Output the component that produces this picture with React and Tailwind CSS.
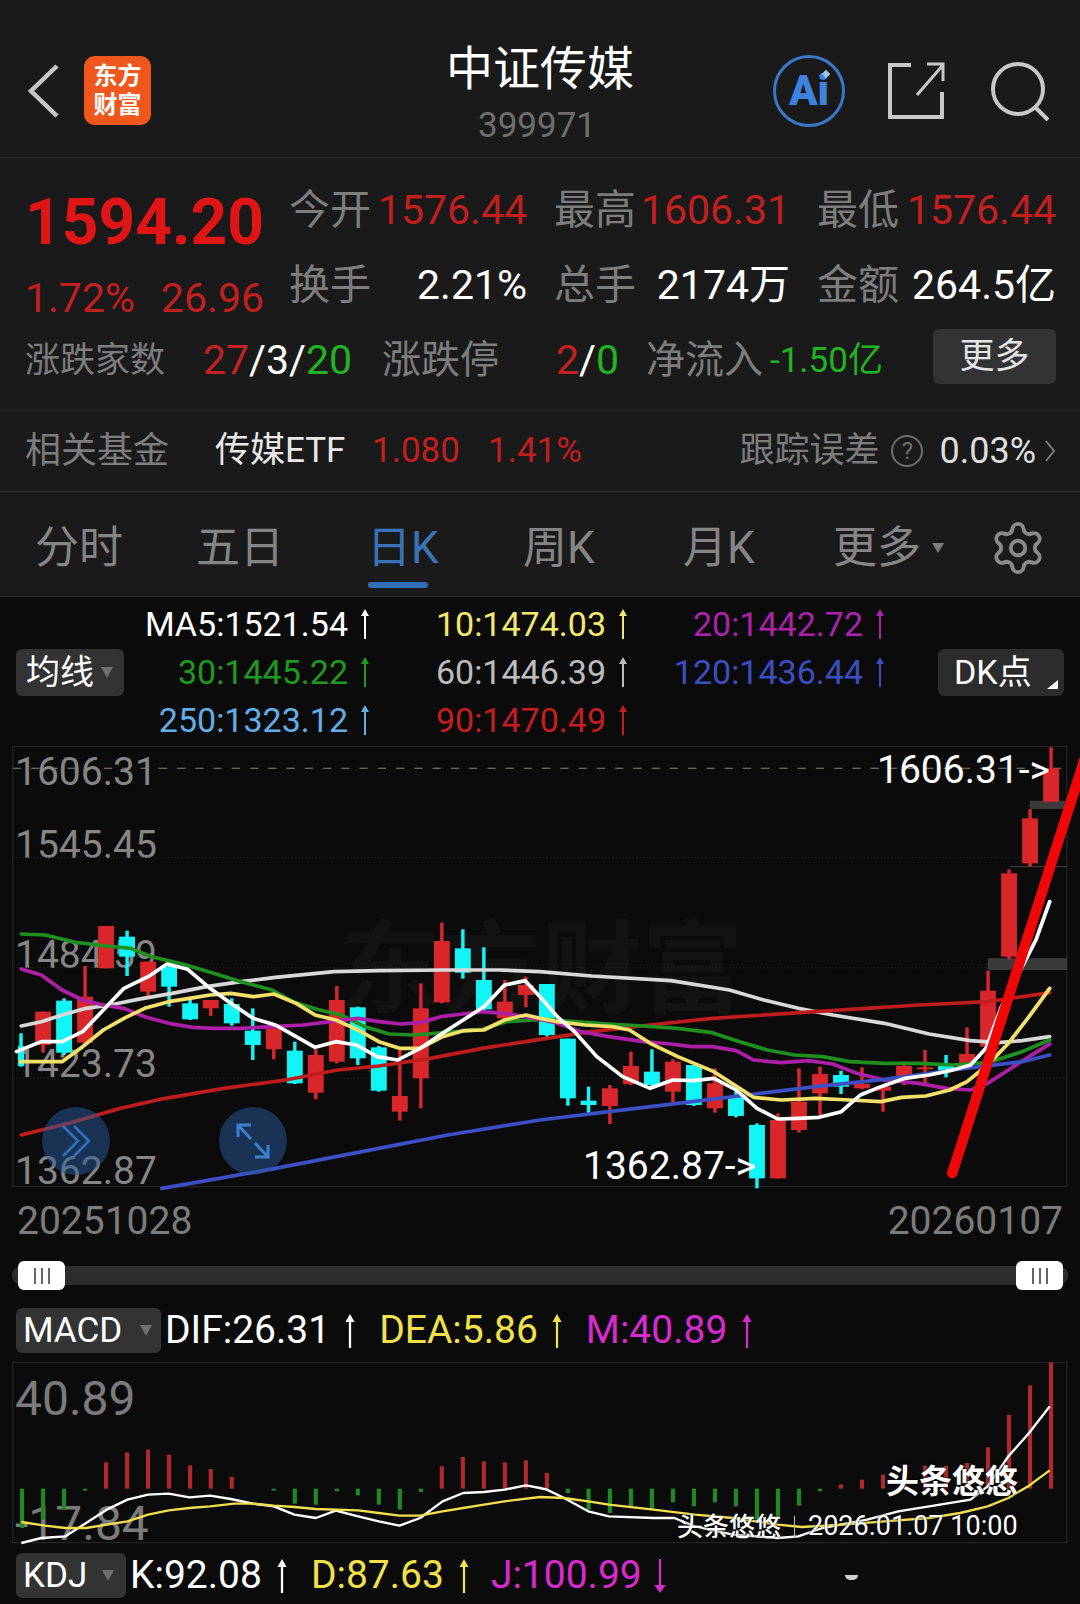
import React from "react";
import { Settings } from "lucide-react";

// candles: [x, wickTop, wickBottom, bodyTop, bodyBottom, up?]
const candles = [
  [61, 880, 980, 918, 978, 0], [125, 815, 938, 815, 915, 1], [186, 775, 945, 782, 938, 0], [247, 678, 910, 770, 908, 1],
  [308, 558, 685, 558, 685, 1], [369, 572, 708, 590, 650, 0], [430, 665, 770, 665, 755, 1], [491, 668, 800, 680, 740, 0],
  [552, 770, 840, 790, 838, 0], [612, 780, 828, 780, 805, 1], [673, 775, 857, 792, 850, 0], [734, 805, 960, 872, 915, 0],
  [795, 865, 958, 865, 928, 1], [856, 905, 1032, 932, 1030, 0], [917, 928, 1078, 945, 1058, 1], [978, 738, 970, 780, 965, 1],
  [1039, 800, 975, 802, 955, 0], [1100, 918, 1055, 922, 1052, 0], [1161, 930, 1142, 1068, 1115, 1], [1222, 730, 1105, 805, 1015, 1],
  [1283, 548, 790, 603, 787, 1], [1344, 568, 716, 625, 698, 0], [1405, 622, 810, 720, 808, 0], [1466, 720, 840, 785, 835, 1],
  [1527, 710, 802, 735, 765, 1],
  [1588, 732, 890, 732, 885, 0], [1649, 896, 1097, 896, 1075, 0], [1709, 1040, 1122, 1082, 1095, 0], [1771, 1035, 1152, 1045, 1098, 1],
  [1832, 935, 1035, 978, 1032, 1], [1893, 928, 1040, 995, 1035, 0], [1954, 958, 1088, 965, 1055, 1], [2015, 975, 1098, 975, 1095, 0],
  [2076, 985, 1118, 1030, 1105, 1], [2137, 1050, 1132, 1068, 1128, 0], [2198, 1150, 1345, 1155, 1315, 0], [2259, 1120, 1315, 1140, 1315, 1],
  [2320, 985, 1178, 1085, 1170, 1], [2381, 980, 1125, 1002, 1060, 1], [2442, 992, 1062, 1005, 1040, 0], [2503, 982, 1048, 1032, 1045, 1],
  [2564, 1040, 1115, 1040, 1052, 1], [2625, 965, 1035, 978, 1012, 1], [2686, 930, 1030, 982, 988, 1], [2747, 945, 1012, 978, 992, 0],
  [2808, 862, 975, 942, 975, 1], [2869, 692, 925, 752, 920, 1], [2930, 388, 658, 400, 650, 1], [2991, 208, 380, 235, 370, 1],
  [3052, 22, 185, 85, 185, 1],
];

// moving averages, right half x is offset by 1568
const R = 1568;
const toPoints = (left, right) =>
  [...left.map(([x, y]) => `${x},${y}`), ...right.map(([x, y]) => `${x + R},${y}`)].join(" ");

const maLines = [
  ["#d8d8d8", toPoints(
    [[62,858],[120,845],[180,825],[250,805],[320,795],[400,778],[500,760],[600,740],[700,725],[800,712],[970,695],[1100,692],[1300,690],[1450,690],[1568,695]],
    [[150,708],[380,722],[550,750],[650,780],[750,805],[850,825],[1000,850],[1130,882],[1250,902],[1330,908],[1400,902],[1480,890]])],
  ["#bf1d1d", toPoints(
    [[62,1185],[200,1150],[350,1105],[480,1075],[650,1045],[830,1020],[980,990],[1100,978],[1250,955],[1400,925],[1568,898]],
    [[150,875],[320,855],[500,835],[800,815],[1100,795],[1300,785],[1480,758]])],
  ["#1f8f1f", toPoints(
    [[62,582],[130,585],[220,607],[310,618],[380,625],[440,650],[530,672],[620,700],[700,725],[790,750],[850,785],[920,808],[990,825],[1060,860],[1130,882],[1200,885],[1290,878],[1400,868],[1470,845],[1568,838]],
    [[100,845],[200,852],[300,858],[400,865],[500,878],[580,905],[660,930],[740,945],[820,950],[900,965],[1000,970],[1100,970],[1200,975],[1300,968],[1400,935],[1480,900]])],
  ["#ad1fa6", toPoints(
    [[62,687],[120,705],[180,750],[240,780],[300,795],[360,805],[420,830],[490,850],[560,862],[620,865],[700,865],[790,860],[880,855],[960,845],[1040,835],[1100,845],[1165,852],[1220,848],[1280,830],[1345,822],[1400,815],[1465,820],[1527,830],[1568,838]],
    [[50,850],[120,875],[200,890],[300,905],[380,912],[440,920],[500,920],[570,932],[620,960],[700,968],[780,962],[850,972],[920,1000],[1000,1020],[1100,1030],[1180,1045],[1250,1050],[1300,1030],[1360,990],[1420,950],[1480,912]])],
  ["#3d4fc4", toPoints(
    [[470,1345],[800,1285],[1100,1225],[1300,1185],[1568,1140]],
    [[200,1115],[400,1090],[600,1065],[800,1040],[1000,1018],[1200,990],[1400,965],[1480,945]])],
  ["#f3e06a", toPoints(
    [[60,965],[180,965],[240,920],[300,870],[360,835],[420,805],[490,785],[550,775],[610,765],[670,760],[735,770],[795,762],[860,790],[915,825],[975,840],[1040,870],[1100,905],[1160,925],[1220,925],[1285,890],[1345,872],[1405,870],[1465,840],[1527,825],[1568,835]],
    [[50,845],[130,855],[210,860],[260,870],[320,910],[400,950],[505,995],[620,1072],[700,1080],[800,1075],[900,1080],[990,1085],[1050,1072],[1120,1068],[1190,1050],[1240,1025],[1300,975],[1360,910],[1420,830],[1480,745]])],
  ["#ffffff", toPoints(
    [[48,935],[120,905],[180,905],[240,875],[300,810],[360,745],[430,710],[485,672],[545,688],[610,745],[670,790],[735,835],[800,855],[860,890],[915,922],[975,905],[1035,915],[1095,950],[1155,960],[1220,925],[1285,880],[1345,840],[1405,800],[1465,735],[1525,722],[1568,770]],
    [[50,830],[100,875],[165,950],[240,1010],[320,1045],[385,1020],[445,1022],[505,1015],[570,1050],[630,1105],[690,1137],[750,1135],[810,1132],[875,1115],[930,1065],[990,1040],[1060,1015],[1130,1005],[1190,992],[1250,975],[1295,925],[1340,800],[1390,700],[1440,600],[1480,485]])],
];

// macd histogram [x, end of bar], zero line at 897
const macdBars = [
  [64,1015],[125,990],[186,960],[247,903],[308,818],[369,788],[430,780],[491,795],[552,827],[612,838],[673,862],[795,903],[856,942],[917,945],[978,905],[1039,917],[1100,945],[1161,960],[1222,907],[1283,830],[1344,802],[1405,815],[1466,818],[1527,812],
  [1588,850],[1649,910],[1709,960],[1771,970],[1832,955],[1893,958],[1954,938],[2015,950],[2076,938],[2137,950],[2198,990],[2259,985],[2320,948],[2381,905],[2442,884],[2503,870],[2564,855],[2625,850],[2686,828],[2747,828],[2808,820],[2869,773],[2930,675],[2991,587],[3052,518],
];

const difLine = toPoints(
  [[62,1060],[120,1045],[190,1040],[250,1000],[310,960],[370,930],[430,915],[490,912],[550,923],[610,918],[670,928],[735,942],[795,950],[855,975],[917,985],[975,963],[1040,980],[1100,995],[1160,1008],[1220,985],[1285,935],[1345,910],[1405,907],[1465,900],[1527,887],[1568,895]],
  [[20,900],[70,925],[140,965],[200,980],[330,985],[390,985],[450,1010],[560,1035],[690,1045],[750,1040],[820,1015],[950,990],[1040,965],[1130,950],[1250,930],[1300,890],[1360,800],[1420,730],[1480,650]]);
const deaLine = toPoints(
  [[62,997],[130,1008],[190,1015],[250,1015],[310,1005],[370,995],[430,975],[490,962],[550,955],[610,950],[680,942],[735,942],[795,948],[855,952],[917,958],[1040,962],[1100,970],[1160,978],[1220,978],[1285,965],[1345,955],[1405,945],[1465,935],[1568,922]],
  [[70,925],[140,935],[200,945],[330,960],[450,975],[560,985],[690,1005],[760,1012],[880,1005],[1000,995],[1130,985],[1220,970],[1300,950],[1360,925],[1420,888],[1480,842]]);

function Arrow({ down, big, className }) {
  return (
    <svg width={big ? 12 : 10} height={big ? 34 : 30} viewBox="0 0 10 30" className={className} fill="currentColor">
      {down ? <path d="M4 0h2v23l4 0-5 7-5-7 4 0z" /> : <path d="M5 0l4 7-3 0v23H4V7L1 7z" />}
    </svg>
  );
}

function Stat({ label, value, valueClass }) {
  return (
    <div className="flex items-center justify-between h-[75px]">
      <span className="text-[41px] leading-none text-[#7d7d7d]">{label}</span>
      <span className={`text-[41px] leading-none ${valueClass}`}>{value}</span>
    </div>
  );
}

function Ma({ text, color }) {
  return (
    <div className={`flex items-center justify-end h-[48px] text-[34px] leading-none ${color}`}>
      <span>{text}</span>
      <Arrow className="ml-[12px] mr-[2px]" />
    </div>
  );
}

function Caret({ className }) {
  return <span className={`w-0 h-0 border-x-[6px] border-x-transparent border-t-[11px] border-t-[#6f6f6f] ${className}`} />;
}

function Handle() {
  return (
    <div className="w-[47px] h-[29px] bg-white rounded-[6px] flex items-center justify-center gap-[5px]">
      <span className="w-[2px] h-[16px] bg-[#666]" />
      <span className="w-[2px] h-[16px] bg-[#666]" />
      <span className="w-[2px] h-[16px] bg-[#666]" />
    </div>
  );
}

function AxisLabel({ top, children, className = "text-[#868686] text-[39px]" }) {
  return <span className={`absolute leading-none ${className}`} style={{ top }}>{children}</span>;
}

export default function App() {
  return (
    <div className="w-[1080px] h-[1604px] overflow-hidden bg-[#0b0b0c] font-[Roboto,'Noto_Sans_CJK_SC',sans-serif]">
      {/* top bar */}
      <header className="relative h-[158px] bg-[#1a1a1b] border-b border-[#2b2b2c] flex items-center pl-[27px] pr-[30px]">
        <svg width="32" height="54" viewBox="0 0 32 54" fill="none" stroke="#c6c6c6" strokeWidth="4.5" className="mt-[24px]">
          <path d="M30 2L4 27l26 25" />
        </svg>
        <div className="ml-[25px] mt-[24px] w-[67px] h-[69px] rounded-[11px] bg-[#f0571d] flex flex-col items-center justify-center text-white font-bold text-[24px] leading-[29px]">
          <span>东方</span>
          <span>财富</span>
        </div>
        <div className="absolute left-0 right-0 top-[45px] flex flex-col items-center">
          <span className="text-[47px] leading-[47px] text-white">中证传媒</span>
          <span className="mt-[16px] mr-[6px] text-[35px] leading-[35px] text-[#6e6e6e]">399971</span>
        </div>
        <div className="ml-auto mt-[24px] flex items-center">
          <div className="relative w-[72px] h-[72px] rounded-full border-[3px] border-[#3a78c8] flex items-center justify-center text-[#3f82dc] font-black text-[42px] leading-none">
            Ai
            <span className="absolute right-[13px] top-[13px] w-[6px] h-[6px] rotate-45 bg-[#9cc3f2]" />
          </div>
          <svg width="58" height="58" viewBox="0 0 58 58" fill="none" stroke="#c8c8c8" strokeWidth="4" className="ml-[43px]">
            <path d="M23 3H2v52h52V30" />
            <path d="M29 33L55 3M39 2h16v17" strokeWidth="3" />
          </svg>
          <svg width="60" height="60" viewBox="0 0 60 60" fill="none" stroke="#c8c8c8" strokeWidth="4" className="ml-[44px]">
            <circle cx="28" cy="28" r="25" />
            <path d="M46 47l12 12" />
          </svg>
        </div>
      </header>

      {/* quote */}
      <section className="h-[252px] bg-[#1a1a1b] border-b border-[#262627] pt-[15px]">
        <div className="flex h-[153px]">
          <div className="w-[289px] pl-[25px] pr-[25px]">
            <div className="h-[74px] mt-[13px] flex items-center text-[64px] leading-none font-bold text-[#e01616]">1594.20</div>
            <div className="flex justify-between items-center h-[74px] mt-[1px] text-[41px] leading-none text-[#c21f1f]">
              <span>1.72%</span>
              <span>26.96</span>
            </div>
          </div>
          <div className="grid grid-cols-[238px_236px_239px] gap-x-[27px] content-start">
            <Stat label="今开" value="1576.44" valueClass="text-[#c21f1f]" />
            <Stat label="最高" value="1606.31" valueClass="text-[#c21f1f]" />
            <Stat label="最低" value="1576.44" valueClass="text-[#c21f1f]" />
            <Stat label="换手" value="2.21%" valueClass="text-white" />
            <Stat label="总手" value="2174万" valueClass="text-white" />
            <Stat label="金额" value="264.5亿" valueClass="text-white" />
          </div>
        </div>
        <div className="relative flex items-center h-[69px] pl-[25px] text-[41px] leading-none text-[#7d7d7d]">
          <span className="w-[178px] text-[35px]">涨跌家数</span>
          <span className="w-[179px]">
            <span className="text-[#c42222]">27</span>
            <span className="text-white">/3/</span>
            <span className="text-[#22b522]">20</span>
          </span>
          <span className="w-[174px] text-[39px]">涨跌停</span>
          <span className="w-[90px]">
            <span className="text-[#c42222]">2</span>
            <span className="text-white">/</span>
            <span className="text-[#22b522]">0</span>
          </span>
          <span className="w-[124px] text-[39px]">净流入</span>
          <span className="text-[35px] text-[#22b522]">-1.50亿</span>
          <span className="absolute left-[933px] top-[3px] w-[123px] h-[55px] rounded-[6px] bg-[#333334] flex items-center justify-center text-[35px] text-[#e4e4e4]">更多</span>
        </div>
      </section>

      {/* fund */}
      <section className="h-[82px] bg-[#1a1a1b] border-b border-[#303031] flex items-center pl-[25px] pr-[24px] leading-none">
        <span className="w-[190px] text-[36px] text-[#7d7d7d]">相关基金</span>
        <span className="w-[157px] text-[35px] text-[#e8e8e8]">传媒ETF</span>
        <span className="w-[116px] text-[35px] text-[#c21f1f]">1.080</span>
        <span className="text-[35px] text-[#c21f1f]">1.41%</span>
        <span className="ml-auto text-[35px] text-[#7d7d7d]">跟踪误差</span>
        <span className="ml-[12px] w-[32px] h-[32px] rounded-full border-2 border-[#6f6f6f] flex items-center justify-center text-[24px] text-[#6f6f6f]">?</span>
        <span className="ml-[16px] text-[36px] text-[#dedede]">0.03%</span>
        <svg width="12" height="24" viewBox="0 0 12 24" fill="none" stroke="#7d7d7d" strokeWidth="2" className="ml-[8px]">
          <path d="M2 2l8 10-8 10" />
        </svg>
      </section>

      {/* tabs */}
      <nav className="relative h-[105px] bg-[#1a1a1b] border-b border-[#2b2b2c] flex items-center text-[44px] leading-none text-[#858585] pt-[8px]">
        <span className="ml-[35px] w-[161px]">分时</span>
        <span className="w-[171px]">五日</span>
        <span className="w-[156px] text-[#3a72b8]">日K</span>
        <span className="w-[160px]">周K</span>
        <span className="w-[150px]">月K</span>
        <span>更多</span>
        <span className="ml-[11px] w-0 h-0 border-x-[6px] border-x-transparent border-t-[10px] border-t-[#7d7d7d]" />
        <Settings size={58} strokeWidth={1.6} className="ml-auto mr-[33px] text-[#8a8a8a]" />
        <span className="absolute left-[368px] top-[90px] w-[60px] h-[6px] rounded-full bg-[#2f6db4]" />
      </nav>

      {/* moving averages */}
      <section className="h-[143px] pt-[7px] flex items-center pl-[16px] pr-[16px]">
        <div className="w-[108px] h-[47px] rounded-[6px] bg-[#333334] flex items-center pl-[10px] text-[34px] leading-none text-white">
          均线
          <Caret className="ml-[7px]" />
        </div>
        <div className="w-[763px] grid grid-cols-[248px_258px_257px]">
          <Ma text="MA5:1521.54" color="text-white" />
          <Ma text="10:1474.03" color="text-[#f4e86e]" />
          <Ma text="20:1442.72" color="text-[#ab22ab]" />
          <Ma text="30:1445.22" color="text-[#1f9a1f]" />
          <Ma text="60:1446.39" color="text-[#bdbdbd]" />
          <Ma text="120:1436.44" color="text-[#3a4fc0]" />
          <Ma text="250:1323.12" color="text-[#62aee8]" />
          <Ma text="90:1470.49" color="text-[#c41e1e]" />
        </div>
        <div className="relative ml-auto w-[126px] h-[47px] rounded-[6px] bg-[#2c2c2d] flex items-center pl-[16px] text-[34px] leading-none text-white">
          DK点
          <span className="absolute right-[6px] bottom-[7px] w-0 h-0 border-l-[11px] border-l-transparent border-b-[9px] border-b-white" />
        </div>
      </section>

      {/* candle chart */}
      <section className="relative h-[460px]">
        <span className="absolute left-[339px] top-[180px] text-[101px] leading-none font-bold text-[#121213]">东方财富</span>
        <AxisLabel top={13}><span className="ml-[15px]">1606.31</span></AxisLabel>
        <AxisLabel top={86}><span className="ml-[15px]">1545.45</span></AxisLabel>
        <AxisLabel top={196}><span className="ml-[15px]">1484.59</span></AxisLabel>
        <AxisLabel top={305}><span className="ml-[15px]">1423.73</span></AxisLabel>
        <AxisLabel top={412}><span className="ml-[15px]">1362.87</span></AxisLabel>
        <svg width="1080" height="460" viewBox="0 0 3136 1380" preserveAspectRatio="none" className="relative block">
          <rect x="37" y="20" width="3061" height="1320" fill="none" stroke="#2a2a2b" strokeWidth="3" />
          <path d="M37 352H3098M37 683H3098M37 1015H3098" stroke="#232324" strokeWidth="3" strokeDasharray="4 6" />
          <path d="M37 85H3098" stroke="#8a8475" strokeWidth="3" strokeDasharray="24 29" />
          <path d="M2990 182H3098V207H2990zM2933 378H3098V382H2933zM2868 655H3098V690H2868z" fill="#3a3a3b" />
          {candles.map(([x, wt, wb, bt, bb, up]) => {
            const color = up ? "#d8262a" : "#12f5f7";
            const w = x === 61 ? 18 : 46;
            return (
              <g key={x} fill={color}>
                <rect x={x - 5} y={wt} width="10" height={wb - wt} />
                <rect x={x - w / 2} y={bt} width={w} height={bb - bt} />
              </g>
            );
          })}
          {maLines.map(([color, points]) => (
            <polyline key={color} points={points} fill="none" stroke={color} strokeWidth="11" strokeLinejoin="round" strokeLinecap="round" />
          ))}
          <path d="M2765 1300L3150 55" stroke="#f00808" strokeWidth="30" strokeLinecap="round" />
        </svg>
        <AxisLabel top={11} className="text-white text-[39px]"><span className="ml-[877px]">1606.31-&gt;</span></AxisLabel>
        <AxisLabel top={407} className="text-white text-[39px]"><span className="ml-[583px]">1362.87-&gt;</span></AxisLabel>
        <div className="absolute left-[42px] top-[367px] w-[68px] h-[68px] rounded-full bg-[#2a5a9a]/50 flex items-center justify-center">
          <svg width="30" height="32" viewBox="0 0 30 32" fill="none" stroke="#2f72c4" strokeWidth="2.5">
            <path d="M2 1l15 15L2 31M13 1l15 15-15 15" />
          </svg>
        </div>
        <div className="absolute left-[219px] top-[367px] w-[68px] h-[68px] rounded-full bg-[#2a5a9a]/50 flex items-center justify-center">
          <svg width="34" height="36" viewBox="0 0 34 36" fill="none" stroke="#3b7fd0" strokeWidth="3">
            <path d="M2 14V2h13M2 2l13 14M32 22v12H19M32 34L19 20" />
          </svg>
        </div>
      </section>

      {/* date axis */}
      <div className="h-[55px] flex justify-between pl-[17px] pr-[17px] pt-[2px] text-[39px] leading-none text-[#7c7c7c]">
        <span>20251028</span>
        <span>20260107</span>
      </div>

      {/* range slider */}
      <div className="relative h-[50px] mx-[12px]">
        <div className="absolute left-0 right-0 top-[11px] h-[19px] rounded-full bg-[#2d2d2e]" />
        <div className="relative flex justify-between pl-[6px] pr-[5px] pt-[6px]">
          <Handle />
          <Handle />
        </div>
      </div>

      {/* macd legend */}
      <div className="h-[57px] pb-[6px] pl-[16px] flex items-center text-[39px] leading-none">
        <div className="w-[145px] h-[45px] rounded-[6px] bg-[#333334] flex items-center pl-[7px] text-[35px] text-white">
          MACD
          <Caret className="ml-[18px]" />
        </div>
        <span className="ml-[4px] text-white">DIF:26.31</span>
        <Arrow big className="ml-[14px] text-white" />
        <span className="ml-[23px] text-[#f2e24a]">DEA:5.86</span>
        <Arrow big className="ml-[13px] text-[#f2e24a]" />
        <span className="ml-[23px] text-[#d92ad0]">M:40.89</span>
        <Arrow big className="ml-[14px] text-[#d92ad0]" />
      </div>

      {/* macd chart */}
      <section className="relative h-[186px]">
        <span className="absolute left-[15px] top-[13px] text-[48px] leading-none text-[#7b7b7b]">40.89</span>
        <span className="absolute left-[15px] top-[138px] text-[48px] leading-none text-[#7b7b7b]">-17.84</span>
        <svg width="1080" height="186" viewBox="0 0 3136 558" preserveAspectRatio="none" className="relative block">
          <g transform="translate(0 -517)">
            <rect x="37" y="518" width="3061" height="541" fill="none" stroke="#2a2a2b" strokeWidth="3" />
            {macdBars.map(([x, y]) => (
              <rect key={x} x={x - 6} y={Math.min(y, 897)} width="12" height={Math.abs(y - 897)} fill={y > 897 ? "#1f8a24" : "#b02a2c"} />
            ))}
            <polyline points={difLine} fill="none" stroke="#ffffff" strokeWidth="7" strokeLinejoin="round" />
            <polyline points={deaLine} fill="none" stroke="#f0e050" strokeWidth="7" strokeLinejoin="round" />
          </g>
        </svg>
        <span className="absolute left-[886px] top-[103px] text-[33px] leading-none font-bold text-white [text-shadow:0_0_3px_#000]">头条悠悠</span>
        <div className="absolute left-[677px] top-[151px] flex items-center text-[27px] leading-none text-white [text-shadow:0_0_2px_#000]">
          <span className="text-[26px] font-medium">头条悠悠</span>
          <span className="mx-[13px] w-[1px] h-[22px] bg-[#bbb]" />
          <span>2026.01.07 10:00</span>
        </div>
      </section>

      {/* kdj legend */}
      <div className="relative h-[61px] pb-[6px] pl-[16px] flex items-center text-[39px] leading-none">
        <div className="w-[110px] h-[45px] rounded-[6px] bg-[#333334] flex items-center pl-[7px] text-[35px] text-white">
          KDJ
          <Caret className="ml-[15px]" />
        </div>
        <span className="ml-[4px] text-white">K:92.08</span>
        <Arrow big className="ml-[14px] text-white" />
        <span className="ml-[23px] text-[#f2e24a]">D:87.63</span>
        <Arrow big className="ml-[14px] text-[#f2e24a]" />
        <span className="ml-[21px] text-[#d92ad0]">J:100.99</span>
        <Arrow big down className="ml-[12px] text-[#d92ad0]" />
        <span className="absolute left-[845px] top-[27px] w-[13px] h-[5px] rounded-b-full bg-[#cfcfcf]" />
      </div>
    </div>
  );
}
